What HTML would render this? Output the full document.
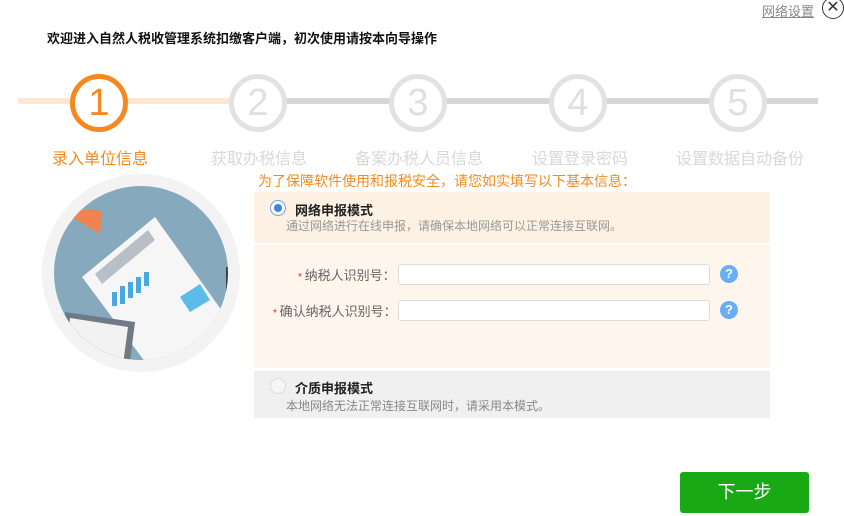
<!DOCTYPE html>
<html><head><meta charset="utf-8"><style>
*{margin:0;padding:0;box-sizing:border-box}
body{width:844px;height:516px;background:#fff;position:relative;overflow:hidden;font-family:"Liberation Sans","Noto Sans CJK SC",sans-serif}
.a{position:absolute}
.lbl{position:absolute;top:145px;font-size:16px;color:#d8d8d8;white-space:nowrap}
.circ{position:absolute;top:74px;width:58px;height:58px;border-radius:50%;border:5px solid #e2e2e2;background:#fff;color:#e0e0e0;font-size:38px;line-height:48px;text-align:center;font-weight:300}
input{position:absolute;height:21px;border:1px solid #dcdcdc;border-radius:3px;background:#fff}
.q{position:absolute;width:18px;height:18px;border-radius:50%;background:#6aaef5;color:#fff;font-size:13px;font-weight:bold;text-align:center;line-height:18px}
</style></head><body>
<div class="a" style="left:762px;top:1px;font-size:13px;color:#888;text-decoration:underline">网络设置</div>
<div class="a" style="left:822px;top:-3px;width:22px;height:22px;border:1px solid #333;border-radius:50%;font-size:16px;line-height:20px;text-align:center;color:#333">✕</div>
<div class="a" style="left:47px;top:28px;font-size:13px;font-weight:bold;color:#111">欢迎进入自然人税收管理系统扣缴客户端，初次使用请按本向导操作</div>
<div class="a" style="left:18px;top:98px;width:800px;height:6px;background:#d6d6d6"></div>
<div class="a" style="left:18px;top:98px;width:212px;height:6px;background:#fde6d2"></div>
<div class="circ" style="left:70px;border-color:#f5891f;color:#f5891f">1</div>
<div class="circ" style="left:229px">2</div>
<div class="circ" style="left:389px">3</div>
<div class="circ" style="left:549px">4</div>
<div class="circ" style="left:709px">5</div>
<div class="lbl" style="left:52px;color:#f5891f">录入单位信息</div>
<div class="lbl" style="left:211px">获取办税信息</div>
<div class="lbl" style="left:355px">备案办税人员信息</div>
<div class="lbl" style="left:532px">设置登录密码</div>
<div class="lbl" style="left:676px">设置数据自动备份</div>
<svg class="a" style="left:40px;top:172px" width="202" height="202" viewBox="0 0 202 202">
<circle cx="101" cy="101" r="99" fill="#f3f3f3"/>
<circle cx="101" cy="101" r="87" fill="#86a9bd"/>
<clipPath id="c"><circle cx="101" cy="101" r="87"/></clipPath>
<g clip-path="url(#c)">
<path d="M30 44 A30 30 0 0 1 62 40 L60 62 Z" fill="#ef8450"/>
<polygon points="42,105 115,45 190,150 120,210" fill="#f6f6f6"/>
<polygon points="55,102 108,58 115,68 62,112" fill="#b9bfc6"/>
<polygon points="140,125 160,112 170,128 150,140" fill="#5bbce8"/>
<g fill="#4aa8e0"><rect x="72" y="120" width="5" height="14"/><rect x="80" y="114" width="5" height="18"/><rect x="88" y="110" width="5" height="16"/><rect x="96" y="105" width="5" height="16"/><rect x="104" y="100" width="5" height="14"/></g>
<polygon points="25,140 95,150 88,205 20,200" fill="#6f7a86"/>
<polygon points="30,146 88,155 82,200 25,196" fill="#f2f2f2"/>
<rect x="186" y="95" width="7" height="48" fill="#3b3f45"/>
</g></svg>
<div class="a" style="left:258px;top:171px;font-size:14px;color:#f5891f">为了保障软件使用和报税安全，请您如实填写以下基本信息：</div>
<div class="a" style="left:254px;top:192px;width:516px;height:51px;background:#fdf1e4"></div>
<div class="a" style="left:254px;top:245px;width:516px;height:123px;background:#fef5ec"></div>
<div class="a" style="left:254px;top:371px;width:516px;height:47px;background:#f0f0f0"></div>
<div class="a" style="left:270px;top:200px;width:16px;height:16px;border:1px solid #6aa0e8;border-radius:50%;background:#fff"><div style="margin:3px;width:8px;height:8px;border-radius:50%;background:#3c86e8"></div></div>
<div class="a" style="left:295px;top:200px;font-size:13px;font-weight:bold;color:#222">网络申报模式</div>
<div class="a" style="left:286px;top:217px;font-size:12px;color:#999">通过网络进行在线申报，请确保本地网络可以正常连接互联网。</div>
<div class="a" style="left:298px;top:265px;font-size:13px;color:#666"><span style="color:#e22;font-size:10px">* </span>纳税人识别号：</div>
<div class="a" style="left:273px;top:301px;font-size:13px;color:#666"><span style="color:#e22;font-size:10px">* </span>确认纳税人识别号：</div>
<input style="left:398px;top:264px;width:312px">
<input style="left:398px;top:300px;width:312px">
<div class="q" style="left:720px;top:265px">?</div>
<div class="q" style="left:720px;top:301px">?</div>
<div class="a" style="left:270px;top:378px;width:16px;height:16px;border:1px solid #ddd;border-radius:50%;background:#f6f6f6"></div>
<div class="a" style="left:295px;top:378px;font-size:13px;font-weight:bold;color:#222">介质申报模式</div>
<div class="a" style="left:286px;top:397px;font-size:12px;color:#888">本地网络无法正常连接互联网时，请采用本模式。</div>
<div class="a" style="left:680px;top:472px;width:129px;height:41px;background:#18a915;border-radius:3px;color:#fff;font-size:18px;text-align:center;line-height:41px">下一步</div>
</body></html>
